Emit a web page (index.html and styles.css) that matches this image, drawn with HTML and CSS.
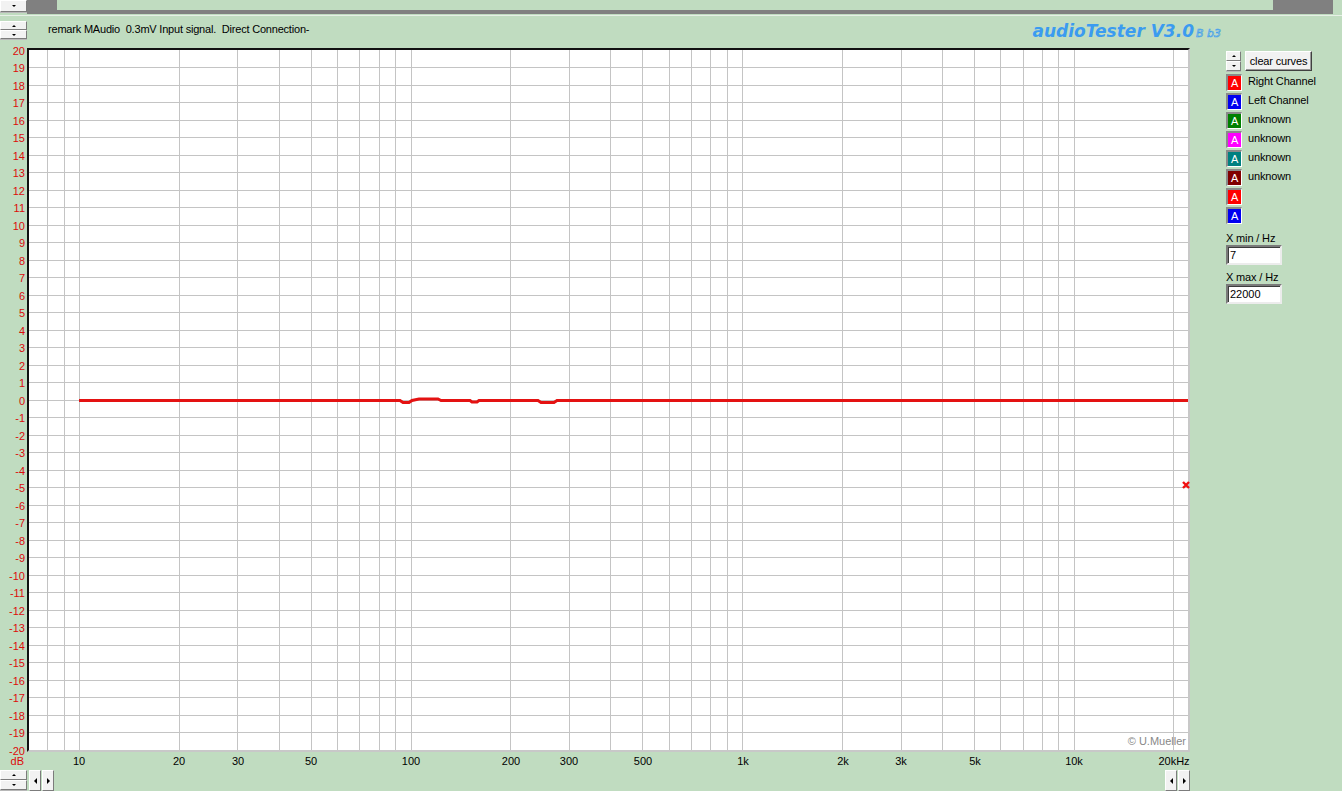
FILE: index.html
```html
<!DOCTYPE html>
<html lang="en">
<head>
  <meta charset="UTF-8" />
  <title>audioTester V3.0</title>
  <link rel="stylesheet" href="styles.css">
</head>
<body>
  <!-- top scroller strip -->
  <div class="topbar">
    <div class="spin spin-cut"><span class="sbtn dn"></span></div>
    <div class="tb-dark"></div>
    <div class="tb-track"></div>
    <div class="tb-dark tb-right"></div>
  </div>
  <div class="sep"></div>

  <!-- remark + title -->
  <div class="header">
    <div class="spin"><span class="sbtn up"></span><span class="sbtn dn"></span></div>
    <div class="remark">remark MAudio&nbsp; 0.3mV Input signal.&nbsp; Direct Connection-</div>
    <div class="title">audioTester V3.0<span class="build">B b3</span></div>
  </div>

  <div class="main">
    <div class="yaxis">
      <span>20</span><span>19</span><span>18</span><span>17</span><span>16</span>
      <span>15</span><span>14</span><span>13</span><span>12</span><span>11</span>
      <span>10</span><span>9</span><span>8</span><span>7</span><span>6</span>
      <span>5</span><span>4</span><span>3</span><span>2</span><span>1</span>
      <span>0</span>
      <span>-1</span><span>-2</span><span>-3</span><span>-4</span><span>-5</span>
      <span>-6</span><span>-7</span><span>-8</span><span>-9</span><span>-10</span>
      <span>-11</span><span>-12</span><span>-13</span><span>-14</span><span>-15</span>
      <span>-16</span><span>-17</span><span>-18</span><span>-19</span><span>-20</span>
    </div>

    <div class="plot">
      <svg width="1159" height="700" viewBox="29 50 1159 700">
        <g stroke="#c4c4c4" stroke-width="1" fill="none">
          <!-- frequency grid, log scale -->
          <path d="M47.5 50V750M64.5 50V750M79.5 50V750M179.5 50V750M237.5 50V750M279.5 50V750M311.5 50V750M337.5 50V750M359.5 50V750M379.5 50V750M395.5 50V750
                   M411.5 50V750M510.5 50V750M569.5 50V750M610.5 50V750M642.5 50V750M669.5 50V750M691.5 50V750M710.5 50V750M727.5 50V750
                   M742.5 50V750M842.5 50V750M901.5 50V750M942.5 50V750M974.5 50V750M1000.5 50V750M1023.5 50V750M1042.5 50V750M1058.5 50V750
                   M1074.5 50V750M1173.5 50V750"/>
          <!-- dB grid -->
          <path d="M29 67.5H1188M29 85.5H1188M29 102.5H1188M29 120.5H1188M29 137.5H1188M29 155.5H1188M29 172.5H1188M29 190.5H1188M29 207.5H1188M29 225.5H1188
                   M29 242.5H1188M29 260.5H1188M29 277.5H1188M29 295.5H1188M29 312.5H1188M29 330.5H1188M29 347.5H1188M29 365.5H1188M29 382.5H1188M29 400.5H1188
                   M29 417.5H1188M29 435.5H1188M29 452.5H1188M29 470.5H1188M29 487.5H1188M29 505.5H1188M29 522.5H1188M29 540.5H1188M29 557.5H1188M29 575.5H1188
                   M29 592.5H1188M29 610.5H1188M29 627.5H1188M29 645.5H1188M29 662.5H1188M29 680.5H1188M29 697.5H1188M29 715.5H1188M29 732.5H1188"/>
        </g>
        <!-- right channel response -->
        <path d="M79 400.5H400L403 402.5H409L412 400.5L419 399H438L441 400.5H470L472 402H477L479 400.5H538L541 402.5H554L557 400.5H1188"
              stroke="#e41212" stroke-width="3" fill="none"/>
        <path d="M1183 482L1189 488M1189 482L1183 488" stroke="#f01010" stroke-width="2.4"/>
      </svg>
      <span class="copy">© U.Mueller</span>
    </div>

    <div class="side">
      <div class="ctrl">
        <div class="spin spin-small"><span class="sbtn up"></span><span class="sbtn dn"></span></div>
        <button class="btn">clear curves</button>
      </div>
      <ul class="curves">
        <li><span class="swatch c-red">A</span>Right Channel</li>
        <li><span class="swatch c-blue">A</span>Left Channel</li>
        <li><span class="swatch c-green">A</span>unknown</li>
        <li><span class="swatch c-magenta">A</span>unknown</li>
        <li><span class="swatch c-teal">A</span>unknown</li>
        <li><span class="swatch c-maroon">A</span>unknown</li>
        <li><span class="swatch c-red">A</span></li>
        <li><span class="swatch c-blue">A</span></li>
      </ul>
      <label class="field-label">X min / Hz</label>
      <input class="field" type="text" value="7">
      <label class="field-label">X max / Hz</label>
      <input class="field" type="text" value="22000">
    </div>

    <div class="unit">dB</div>
    <div class="xaxis">
      <span style="left:52px">10</span>
      <span style="left:152px">20</span>
      <span style="left:211px">30</span>
      <span style="left:284px">50</span>
      <span style="left:384px">100</span>
      <span style="left:484px">200</span>
      <span style="left:542px">300</span>
      <span style="left:616px">500</span>
      <span style="left:716px">1k</span>
      <span style="left:816px">2k</span>
      <span style="left:874px">3k</span>
      <span style="left:948px">5k</span>
      <span style="left:1047px">10k</span>
      <span style="left:1147px">20kHz</span>
    </div>

    <div class="spin spin-foot"><span class="sbtn up"></span><span class="sbtn dn"></span></div>
    <div class="scroll">
      <div class="arrows"><span class="abtn lt"></span><span class="abtn rt"></span></div>
      <div class="arrows arrows-right"><span class="abtn lt"></span><span class="abtn rt"></span></div>
    </div>
  </div>
</body>
</html>
```

FILE: styles.css
```css
* {
  box-sizing: border-box;
}

html, body {
  margin: 0;
  padding: 0;
}

body {
  width: 1342px;
  height: 791px;
  overflow: hidden;
  background: #c0dcc0;
  font-family: "Liberation Sans", Arial, sans-serif;
  font-size: 11px;
  color: #000;
}

/* ---------- top strip ---------- */
.topbar {
  display: flex;
  height: 14px;
}

.tb-dark {
  width: 30px;
  background: #808080;
}

.tb-track {
  width: 1216px;
  border-bottom: 4px solid #808080;
}

.tb-right {
  width: 60px;
}

.sep {
  height: 2px;
  border-bottom: 1px solid #e6f0e6;
}

/* ---------- spin / arrow buttons ---------- */
.spin {
  display: flex;
  flex-direction: column;
  width: 27px;
}

.spin-cut {
  height: 12px;
}

.sbtn, .abtn {
  flex: 1;
  display: flex;
  align-items: center;
  justify-content: center;
  background: #f2f2f2;
  border: 1px solid;
  border-color: #fff #7c7c7c #7c7c7c #fff;
  box-shadow: 0 1px 0 #b8b8b8;
}

.sbtn::after, .abtn::after {
  content: "";
  border: 2px solid transparent;
}

.sbtn.up::after {
  border-top: 0;
  border-bottom: 2px solid #000;
}

.sbtn.dn::after {
  border-bottom: 0;
  border-top: 2px solid #000;
}

.abtn.lt::after {
  border-width: 3px 3px 3px 0;
  border-color: transparent #000 transparent transparent;
}

.abtn.rt::after {
  border-width: 3px 0 3px 3px;
  border-color: transparent transparent transparent #000;
}

/* ---------- header ---------- */
.header {
  display: flex;
  align-items: flex-start;
  height: 32px;
  padding-top: 5px;
  padding-right: 121px;
}

.header .spin {
  height: 18px;
}

.remark {
  margin-left: 21px;
  margin-top: 2px;
  line-height: 13px;
  letter-spacing: -0.2px;
}

.title {
  margin-left: auto;
  font-family: "DejaVu Sans", Verdana, sans-serif;
  font-size: 17px;
  font-weight: bold;
  font-style: italic;
  color: #3b9bf0;
  line-height: 20px;
}

.build {
  margin-left: 2px;
  font-size: 11px;
  font-weight: normal;
  color: transparent;
  -webkit-text-stroke: 0.6px #3b9bf0;
}

/* ---------- main grid ---------- */
.main {
  display: grid;
  grid-template-columns: 27px 1163px 1fr;
  grid-template-rows: 704px 18px 21px;
}

.yaxis {
  grid-column: 1;
  grid-row: 1;
  display: flex;
  flex-direction: column;
  margin-top: -5.25px;
  padding-right: 2px;
  text-align: right;
  color: #dd0a0a;
}

.yaxis span {
  height: 17.5px;
  line-height: 17.5px;
}

.plot {
  grid-column: 2;
  grid-row: 1;
  position: relative;
  background: #fff;
  border: 2px solid;
  border-color: #111 #c8c8c8 #c8c8c8 #111;
}

.plot svg {
  display: block;
  overflow: visible;
}

.copy {
  position: absolute;
  right: 2px;
  bottom: 2px;
  line-height: 13px;
  color: #888;
}

.unit {
  grid-column: 1;
  grid-row: 2;
  padding-right: 3px;
  text-align: right;
  line-height: 18px;
  color: #dd0a0a;
}

.xaxis {
  grid-column: 2;
  grid-row: 2;
  position: relative;
}

.xaxis span {
  position: absolute;
  top: 0;
  width: 40px;
  margin-left: -20px;
  text-align: center;
  line-height: 18px;
}

.spin-foot {
  grid-column: 1;
  grid-row: 3;
  height: 20px;
}

.scroll {
  grid-column: 2;
  grid-row: 3;
  display: flex;
  justify-content: space-between;
  padding-left: 2px;
}

.arrows {
  display: flex;
  gap: 1px;
  height: 21px;
}

.abtn {
  width: 12px;
}

/* ---------- right panel ---------- */
.side {
  grid-column: 3;
  grid-row: 1 / span 3;
  padding: 3px 0 0 36px;
  letter-spacing: -0.15px;
}

.ctrl {
  display: flex;
  gap: 4px;
  height: 20px;
}

.spin-small {
  width: 15px;
}

.btn {
  width: 67px;
  height: 20px;
  padding: 0;
  font-family: inherit;
  font-size: 11px;
  letter-spacing: inherit;
  background: #f2f2f2;
  border: 1px solid;
  border-color: #fff #404040 #404040 #fff;
  box-shadow: inset -1px -1px #9a9a9a;
}

.curves {
  list-style: none;
  margin: 3px 0 0;
  padding: 0;
}

.curves li {
  display: flex;
  align-items: flex-start;
  gap: 6px;
  height: 19px;
  line-height: 15px;
}

.swatch {
  width: 16px;
  height: 17px;
  border-style: solid;
  border-width: 2px 1px 1px 2px;
  border-color: #8a8a8a #fff #fff #8a8a8a;
  color: #fff;
  font-size: 11px;
  line-height: 14px;
  text-align: center;
}

.c-red { background: #f00; }
.c-blue { background: #0000f0; }
.c-green { background: #008000; }
.c-magenta { background: #f0f; }
.c-teal { background: #008080; }
.c-maroon { background: #800000; }

.field-label {
  display: block;
  margin-top: 5px;
  line-height: 14px;
}

.field {
  display: block;
  width: 56px;
  height: 20px;
  padding: 0 0 0 2px;
  font-family: inherit;
  font-size: 11px;
  background: #fff;
  border: 2px solid;
  border-color: #7a7a7a #ececec #ececec #7a7a7a;
  box-shadow: inset 1px 1px #3c3c3c;
  outline: none;
}
```
